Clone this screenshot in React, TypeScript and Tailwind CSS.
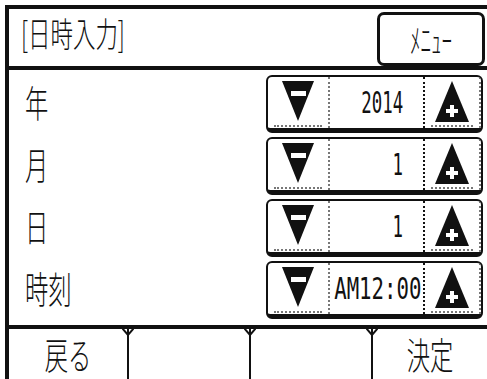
import React from "react";

const JP = "font-['Noto_Sans_CJK_JP',sans-serif] font-light";
const MONO = "font-['DejaVu_Sans_Mono',monospace]";

function DownTri() {
  return (
    <svg width="32" height="40" viewBox="0 0 32 40">
      <polygon points="0,0 32,0 16,40" fill="#111" />
      <rect x="9" y="10" width="15" height="5" fill="#fff" />
    </svg>
  );
}

function UpTri() {
  return (
    <svg width="34" height="41" viewBox="0 0 34 41">
      <polygon points="17,0 34,41 0,41" fill="#111" />
      <rect x="11" y="28" width="12" height="4" fill="#fff" />
      <rect x="15" y="24" width="4" height="12" fill="#fff" />
    </svg>
  );
}

type Row = { label: string; value: string; wide?: boolean };

const rows: Row[] = [
  { label: "年", value: "2014" },
  { label: "月", value: "1" },
  { label: "日", value: "1" },
  { label: "時刻", value: "AM12:00", wide: true },
];

function Spinner({ value, wide }: { value: string; wide?: boolean }) {
  return (
    <div className="flex w-[217px] h-[58px] border-2 border-b-[5px] border-[#111] rounded-[6px] overflow-hidden bg-white">
      <div className="w-[62px] h-full flex flex-col border-r-2 border-dotted border-[#777]">
        <div className="flex-1 flex items-center justify-center">
          <DownTri />
        </div>
        <div className="mx-[6px] mb-[1px] border-b-2 border-dotted border-[#777]" />
      </div>
      <div className={`w-[93px] h-full flex items-center justify-end ${wide ? "pr-[2px]" : "pr-[20px]"}`}>
        <span
          className={`inline-block ${MONO} text-[30px] leading-none text-[#111] origin-right ${
            wide ? "scale-x-[0.69]" : "scale-x-[0.58]"
          }`}
        >
          {value}
        </span>
      </div>
      <div className="flex-1 h-full flex flex-col border-l-2 border-[#111] border-r-2 border-r-[#777] border-dotted">
        <div className="flex-1 flex items-center justify-center">
          <UpTri />
        </div>
        <div className="mx-[6px] mb-[1px] border-b-2 border-dotted border-[#777]" />
      </div>
    </div>
  );
}

function Divider() {
  return (
    <div className="relative w-[2px] h-full bg-[#111]">
      <svg
        className="absolute top-[-1px] left-[-5px]"
        width="12"
        height="8"
        viewBox="0 0 12 8"
      >
        <polyline points="0,0 6,7 12,0" fill="none" stroke="#111" strokeWidth="2" />
      </svg>
    </div>
  );
}

export default function App() {
  return (
    <div className="w-[487px] h-[379px] bg-white overflow-hidden pt-[5px] pl-[5px]">
      <div className="h-full flex flex-col border-l-4 border-t-4 border-[#111]">
        {/* header */}
        <div className="h-[61px] flex justify-between border-b-4 border-[#111] pr-[2px]">
          <div className="pl-[12px] pt-[7px] flex items-start">
            <span className={`inline-block ${JP} text-[34px] leading-none text-[#111] origin-left scale-x-[0.66]`}>
              [日時入力]
            </span>
          </div>
          <div className="self-end mt-[3px] w-[108px] h-[54px] border-[3px] border-[#111] rounded-[7px] flex items-center justify-center">
            <span className={`inline-block ${JP} text-[34px] leading-none text-[#111] scale-x-[0.62]`}>
              ﾒﾆｭｰ
            </span>
          </div>
        </div>
        {/* rows */}
        <div className="flex flex-col gap-[4px] pt-[5px] pb-[6px]">
          {rows.map((r) => (
            <div key={r.label} className="h-[58px] flex items-center justify-between pl-[16px] pr-[4px]">
              <span className={`inline-block ${JP} text-[37px] leading-none text-[#111] origin-left scale-x-[0.63] -mt-[4px]`}>
                {r.label}
              </span>
              <Spinner value={r.value} wide={r.wide} />
            </div>
          ))}
        </div>
        {/* bottom bar */}
        <div className="flex-1 flex border-t-4 border-[#111]">
          <div className="w-[118px] flex items-center justify-center">
            <span className={`inline-block ${JP} text-[37px] leading-none text-[#111] scale-x-[0.63]`}>戻る</span>
          </div>
          <Divider />
          <div className="w-[120px]" />
          <Divider />
          <div className="w-[120px]" />
          <Divider />
          <div className="flex-1 flex items-center justify-center">
            <span className={`inline-block ${JP} text-[37px] leading-none text-[#111] scale-x-[0.63]`}>決定</span>
          </div>
        </div>
      </div>
    </div>
  );
}
